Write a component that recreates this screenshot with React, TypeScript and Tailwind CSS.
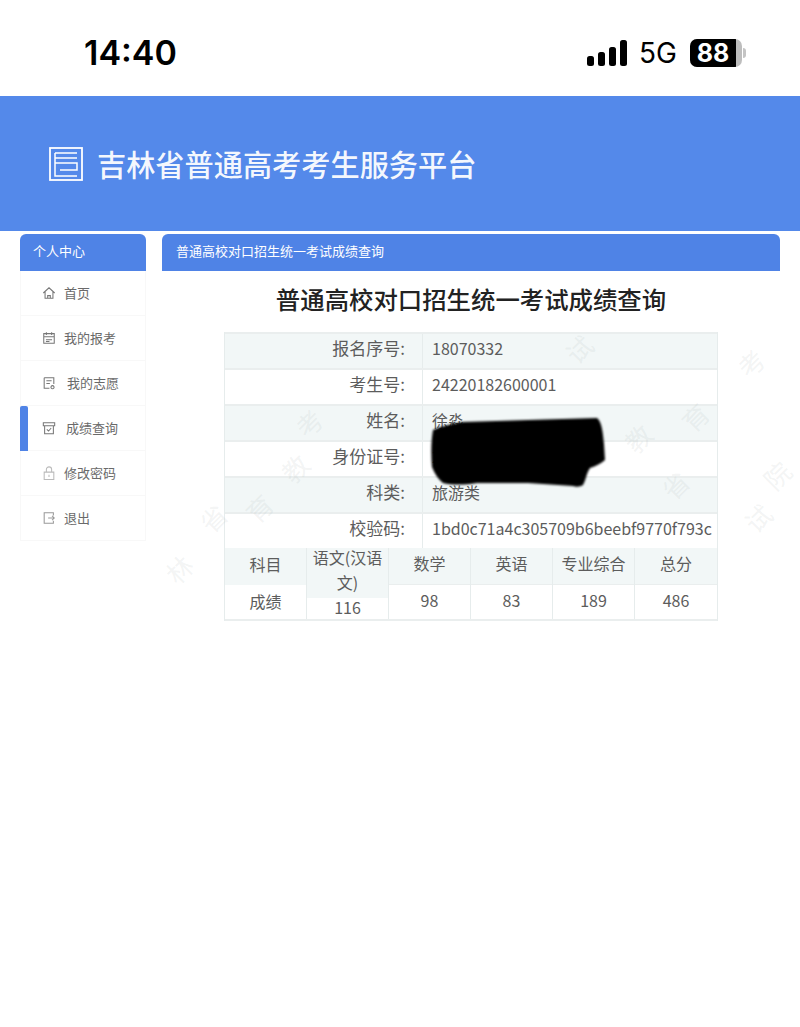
const FONT = "font-['Noto_Sans_CJK_SC','Noto_Sans',sans-serif]";

const infoRows = [
  { label: "报名序号:", value: "18070332", shaded: true },
  { label: "考生号:", value: "24220182600001", shaded: false },
  { label: "姓名:", value: "徐淼", shaded: true },
  { label: "身份证号:", value: "2", shaded: false },
  { label: "科类:", value: "旅游类", shaded: true },
  { label: "校验码:", value: "1bd0c71a4c305709b6beebf9770f793c", shaded: false },
];

const scores = [
  { name: "数学", value: "98" },
  { name: "英语", value: "83" },
  { name: "专业综合", value: "189" },
  { name: "总分", value: "486" },
];

const Logo = () => (
  <svg width="34" height="34" viewBox="0 0 34 34" fill="none" stroke="#fff" strokeWidth="1.5" className="shrink-0">
    <rect x="1" y="1" width="32" height="32" strokeWidth="1.800" />
    <path d="M6 6H28M6 6V29H28M6 11H28M6 16H28V23H11" />
  </svg>
);

const menuIcons = {
  home: <path d="M1.5 8 8 2l6.5 6M3.500 6.500V14h9V6.500M6.500 14v-3h3v3" />,
  apply: <path d="M2 3h12v11H2zM2 6.500h12M5 1.500v3M11 1.500v3M4.500 10h7M4.500 12h4" />,
  wish: <path d="M2.500 2h11v7M2.500 2v12h6M5 5.500h6M5 8.500h4M12 11a1.800 1.800 0 1 0 .01 0" />,
  score: <path d="M1.500 2h13v3.500h-13zM3 5.500V14.500h10V5.500M5.500 9.500l2 2L10.500 8" />,
  lock: <path d="M2.500 7h11v8.500h-11zM5 7V4a3 3 0 0 1 6 0v3M8 10v2.500" />,
  exit: <path d="M13 5V2H2.500v12H13v-3M7 8h7M11.500 5.500 14 8l-2.500 2.500" />,
};

const menu = [
  { icon: menuIcons.home, label: "首页", gap: "ml-[8px]", color: "#777" },
  { icon: menuIcons.apply, label: "我的报考", gap: "ml-[8px]", color: "#777" },
  { icon: menuIcons.wish, label: "我的志愿", gap: "ml-[11px]", color: "#777" },
  { icon: menuIcons.score, label: "成绩查询", gap: "ml-[10px]", color: "#777", active: true },
  { icon: menuIcons.lock, label: "修改密码", gap: "ml-[8px]", color: "#bbb" },
  { icon: menuIcons.exit, label: "退出", gap: "ml-[8px]", color: "#999" },
];

// faint diagonal watermark, only the bits that sit clear of the table text
const marks: [number, number, string][] = [
  [166, 556, "林"], [200, 505, "省"], [246, 495, "育"], [282, 455, "教"], [296, 410, "考"],
  [566, 336, "试"], [625, 425, "教"], [682, 404, "育"], [738, 350, "考"],
  [662, 472, "省"], [745, 505, "试"], [764, 462, "院"],
];

const App = () => {
  return (
    <div className={`relative w-[800px] h-[1027px] overflow-hidden bg-white ${FONT}`}>
      {/* Status Bar */}
      <div className="h-[96px] flex items-center justify-between pl-[84px] pr-[54px] pt-[10px] font-['Inter',sans-serif] text-black">
        <span className="text-[34px] font-semibold leading-none">14:40</span>
        <div className="flex items-center">
          <svg width="40" height="26" viewBox="0 0 40 26" fill="#000">
            <rect x="0" y="16" width="7" height="10" rx="2.500" />
            <rect x="11" y="12" width="7" height="14" rx="2.500" />
            <rect x="22" y="7" width="7" height="19" rx="2.500" />
            <rect x="33" y="0" width="7" height="26" rx="2.500" />
          </svg>
          <span className="ml-[12px] text-[28px] leading-none">5G</span>
          <div className="ml-[13px] flex items-center">
            <div className="w-[52px] h-[28px] rounded-[7px] bg-[#bdbdbd] overflow-hidden">
              <div className="w-[46px] h-full bg-black flex items-center justify-center text-white text-[25px] font-bold leading-none">
                88
              </div>
            </div>
            <div className="w-[3px] h-[10px] ml-[1px] rounded-r bg-[#c4c4c4]" />
          </div>
        </div>
      </div>

      {/* Site Header */}
      <div className="h-[135px] bg-[#5489ea] flex items-center pl-[49px]">
        <Logo />
        <h1 className="ml-[14px] text-[29.200px] font-medium leading-none text-white/95">吉林省普通高考考生服务平台</h1>
      </div>

      <div className="flex mt-[3px] px-[20px] gap-[16px]">
        {/* Sidebar */}
        <aside className="w-[126px] shrink-0">
          <div className="h-[37px] rounded-t-[6px] bg-[#4f83e6] text-white text-[13px] flex items-center pl-[13px] pb-[4px]">
            个人中心
          </div>
          <ul className="text-[13px] text-[#6a6a6a]">
            {menu.map((item) => (
              <li key={item.label} className="relative h-[45px] flex items-center pl-[21px] border-b border-x border-[#f8f8f8]">
                {item.active && <span className="absolute -left-px top-0 w-[8px] h-[45px] bg-[#4f83e6] rounded-t-[2px]" />}
                <svg width="14" height="14" viewBox="0 0 16 16" fill="none" stroke={item.color} strokeWidth="1.200" className="shrink-0">
                  {item.icon}
                </svg>
                <span className={item.gap}>{item.label}</span>
              </li>
            ))}
          </ul>
        </aside>

        {/* Main */}
        <main className="flex-1">
          <div className="h-[37px] rounded-t-[6px] bg-[#4f83e6] text-white text-[13px] flex items-center pl-[14px] pb-[4px]">
            普通高校对口招生统一考试成绩查询
          </div>
          <h2 className="mt-[12px] text-center text-[24.400px] font-medium leading-[32px] text-[#222]">
            普通高校对口招生统一考试成绩查询
          </h2>

          {/* Result Table */}
          <div className="mt-[17px] ml-[62px] w-[494px] text-[16px] text-[#5c5c5c] border-x border-[#e6ecec]">
            {infoRows.map((row) => (
              <div
                key={row.label}
                className={`grid grid-cols-[198px_1fr] h-[36px] border-t-2 border-[#eaeeee] ${row.shaded ? "bg-[#f2f7f7]" : "bg-white"}`}
              >
                <div className="flex items-center justify-end pr-[17px] pb-[7px] text-[17px] leading-none border-r border-[#e6ecec]">{row.label}</div>
                <div className="flex items-center pl-[9px] pb-[7px] leading-none whitespace-nowrap">{row.value}</div>
              </div>
            ))}
            <div className="grid grid-cols-6 grid-rows-1 h-[73px] border-b-2 border-[#eaeeee] text-center">
              <div className="flex flex-col min-h-0 border-r border-[#e6ecec]">
                <div className="h-[37px] pb-[6px] flex items-center justify-center bg-[#f2f7f7] leading-none">科目</div>
                <div className="flex-1 min-h-0 pb-[3px] flex items-center justify-center leading-none">成绩</div>
              </div>
              <div className="flex flex-col min-h-0 border-r border-[#e6ecec]">
                <div className="h-[50px] pb-[6px] flex items-center justify-center bg-[#f2f7f7] leading-[25px] px-1">语文(汉语文)</div>
                <div className="flex-1 min-h-0 pb-[4px] flex items-center justify-center leading-none">116</div>
              </div>
              {scores.map((s, i) => (
                <div key={s.name} className={`flex flex-col min-h-0 ${i < 3 ? "border-r border-[#e6ecec]" : ""}`}>
                  <div className="h-[37px] pb-[6px] flex items-center justify-center bg-[#f2f7f7] border-b border-[#eaeeee] leading-none">{s.name}</div>
                  <div className="flex-1 min-h-0 pb-[5px] flex items-center justify-center leading-none">{s.value}</div>
                </div>
              ))}
            </div>
          </div>
        </main>
      </div>

      {/* Watermark */}
      <div className="absolute inset-0 pointer-events-none text-[26px] leading-none text-[#a9b4b4]/15">
        {marks.map(([x, y, ch]) => (
          <span key={`${x}-${y}`} className="absolute -rotate-45" style={{ left: x, top: y }}>
            {ch}
          </span>
        ))}
      </div>

      {/* Redaction Scribble */}
      <svg className="absolute left-[428px] top-[414px] blur-[1px]" width="180" height="76" viewBox="0 0 180 76">
        <path
          d="M5 16 C14 12 24 10 35 8 L100 6 L169 4 C174 8 175 20 176 30 L177 46 C172 50 168 52 162 54 C158 60 158 66 155 71 C152 73 148 73 145 72 L100 69 L49 69 C36 71 24 71 15 69 C10 65 7 60 4 53 C3 40 3 28 5 16 Z"
          fill="#000"
        />
      </svg>
    </div>
  );
};

export default App;
